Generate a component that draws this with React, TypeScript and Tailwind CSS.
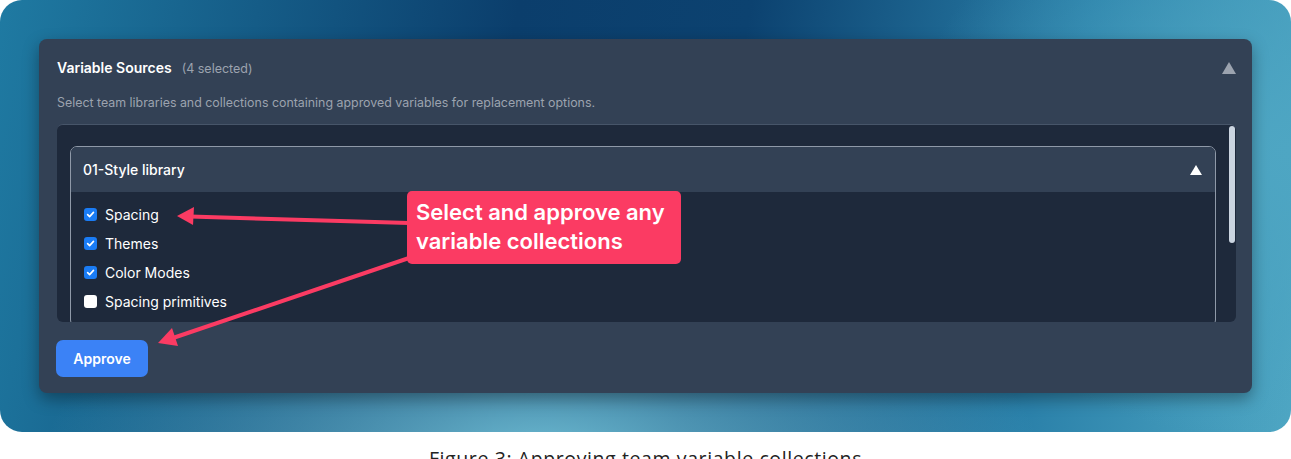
import React from "react";

const items = [
  { label: "Spacing", checked: true },
  { label: "Themes", checked: true },
  { label: "Color Modes", checked: true },
  { label: "Spacing primitives", checked: false },
];

function Box({ checked }: { checked: boolean }) {
  if (!checked) {
    return <span className="block h-[13px] w-[13px] rounded-[3px] bg-white" />;
  }
  return (
    <span className="flex h-[13px] w-[13px] items-center justify-center rounded-[3px] bg-[#1a7cf5]">
      <svg width="9" height="9" viewBox="0 0 10 10" fill="none">
        <path d="M1.8 5.2 4 7.4 8.3 2.6" stroke="white" strokeWidth="1.8" strokeLinecap="round" strokeLinejoin="round" />
      </svg>
    </span>
  );
}

function Arrows() {
  return (
    <svg className="pointer-events-none absolute left-0 top-0" width="1291" height="459">
      <line x1="409" y1="223" x2="190" y2="216.5" stroke="#fb3b63" strokeWidth="4" />
      <polygon points="177,216 194,207 193,225" fill="#fb3b63" />
      <line x1="409" y1="258" x2="170" y2="339" stroke="#fb3b63" strokeWidth="4" />
      <polygon points="158,343 172,328 178,346" fill="#fb3b63" />
    </svg>
  );
}

export default function App() {
  return (
    <div className="relative h-[459px] w-[1291px] overflow-hidden bg-white font-['Inter',sans-serif]">
      <div className="h-[432px] rounded-[22px] bg-[radial-gradient(ellipse_55%_65%_at_42%_105%,#6cbad1_0%,transparent_70%),radial-gradient(ellipse_35%_80%_at_100%_35%,#4ea6c3_0%,transparent_85%),linear-gradient(100deg,#1f7aa2_0%,#0b3e6c_38%,#0c4270_55%,#2a80a9_80%,#4ea6c3_100%)] pl-[39px] pt-[39px]">
        <div className="h-[354px] w-[1213px] rounded-[8px] bg-[#334155] shadow-[0_6px_16px_rgba(0,0,0,0.35)]">
          <div className="flex h-[58px] items-center justify-between pl-[18px] pr-[16px]">
            <div className="flex items-baseline">
              <span className="text-[14px] font-semibold text-white">Variable Sources</span>
              <span className="ml-[10px] text-[12.5px] text-[#9ca3af]">(4 selected)</span>
            </div>
            <svg width="14" height="12" viewBox="0 0 14 12">
              <polygon points="7,0 14,12 0,12" fill="#9ca3af" />
            </svg>
          </div>
          <div className="-mt-[2px] pl-[18px] text-[12.4px] leading-[16px] text-[#9ca3af]">
            Select team libraries and collections containing approved variables for replacement options.
          </div>
          <div className="relative ml-[18px] mt-[13px] h-[198px] w-[1179px] overflow-hidden rounded-[6px] border-t border-[#475569] bg-[#1e293b] pl-[13px] pt-[21px]">
            <div className="absolute right-[1px] top-[1px] h-[117px] w-[6px] rounded-full bg-[#cbd5e1]" />
            <div className="w-[1146px] rounded-[7px] border border-[#8f99a8]">
              <div className="flex h-[45px] items-center justify-between rounded-t-[6px] bg-[#334155] pl-[12px] pr-[13px]">
                <span className="text-[14px] font-medium text-white">01-Style library</span>
                <svg width="12" height="10" viewBox="0 0 12 10">
                  <polygon points="6,0 12,10 0,10" fill="#ffffff" />
                </svg>
              </div>
              <div className="pb-[10px] pl-[13px] pt-[8px]">
                {items.map((it) => (
                  <div key={it.label} className="flex h-[29px] items-center gap-[8px]">
                    <Box checked={it.checked} />
                    <span className="text-[14px] text-white">{it.label}</span>
                  </div>
                ))}
              </div>
            </div>
          </div>
          <button className="ml-[17px] mt-[18px] h-[37px] w-[92px] rounded-[7px] bg-[#3b82f6] text-[14px] font-semibold text-white">
            Approve
          </button>
        </div>
      </div>
      <div className="mt-[14px] text-center font-['Open_Sans',sans-serif] text-[19.5px] leading-[26px] tracking-[0.6px] text-[#222]">
        Figure 3: Approving team variable collections
      </div>
      <Arrows />
      <div className="absolute left-[407px] top-[191px] h-[73px] w-[274px] rounded-[5px] bg-[#fb3b63] pl-[9px] pt-[7px] text-[22px] font-semibold leading-[29px] text-white">
        Select and approve any
        <br />
        variable collections
      </div>
    </div>
  );
}
